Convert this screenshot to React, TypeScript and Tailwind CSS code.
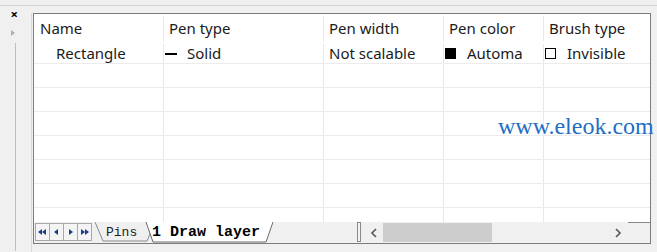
import React from 'react';

const cols = [130, 160, 120, 100, 106];

function Cell({ w, children, className = '' }: { w: number; children?: React.ReactNode; className?: string }) {
  return (
    <div
      className={`h-full shrink-0 flex items-center border-r border-[#e8e8e8] ${className}`}
      style={{ width: w }}
    >
      {children}
    </div>
  );
}

function NavBtn({ kind }: { kind: 'first' | 'prev' | 'next' | 'last' }) {
  return (
    <div className="w-[15px] h-[18px] border border-[#a8a8a8] bg-[#f4f4f4] flex items-center justify-center -ml-px first:ml-0">
      <svg width="9" height="8" viewBox="0 0 9 8" fill="#1e3c8c">
        {kind === 'first' && (
          <>
            <polygon points="0,4 4,1 4,7" />
            <polygon points="4,4 8,1 8,7" />
          </>
        )}
        {kind === 'prev' && <polygon points="2,4 6,1 6,7" />}
        {kind === 'next' && <polygon points="3,1 7,4 3,7" />}
        {kind === 'last' && (
          <>
            <polygon points="1,1 5,4 1,7" />
            <polygon points="5,1 9,4 5,7" />
          </>
        )}
      </svg>
    </div>
  );
}

export default function App() {
  return (
    <div className="w-[657px] h-[252px] bg-[#f0f0f0] relative overflow-hidden font-['Noto_Sans',sans-serif] text-[#1a1a1a]">
      {/* top rule */}
      <div className="h-[5px]" />
      <div className="h-px bg-[#d2d2d2]" />

      <div className="flex h-[246px]">
        {/* Left strip */}
        <div className="w-[33px] shrink-0 flex">
          <div className="w-[15px] flex flex-col items-end">
            <div className="mt-[2px] mr-[-3px] text-[13px] font-bold leading-none text-black">×</div>
            <svg className="mt-[9px]" width="4" height="6" viewBox="0 0 4 6">
              <polygon points="0,0 4,3 0,6" fill="#b0b0b0" />
            </svg>
          </div>
          <div className="w-px bg-[#bdbdbd] mt-[37px] mb-[1px]" />
          <div className="w-[15px]" />
          <div className="w-px bg-[#dadada] mt-[7px]" />
          <div className="w-px" />
        </div>

        {/* Panel */}
        <div className="mt-[7px] w-[618px] h-[231px] border border-[#7c7c7c] bg-white flex flex-col">
          {/* table */}
          <div className="h-[208px] overflow-hidden text-[15px] leading-none">
            <div className="flex h-[27px] pt-[2px]">
              <Cell w={cols[0]} className="pl-[6px]">Name</Cell>
              <Cell w={cols[1]} className="pl-[5px]">Pen type</Cell>
              <Cell w={cols[2]} className="pl-[5px]">Pen width</Cell>
              <Cell w={cols[3]} className="pl-[5px]">Pen color</Cell>
              <Cell w={cols[4]} className="pl-[5px] border-r-0">Brush type</Cell>
            </div>
            <div className="flex h-[23px] border-b border-[#ececec] pt-[3px]">
              <Cell w={cols[0]} className="pl-[22px]">Rectangle</Cell>
              <Cell w={cols[1]} className="pl-px">
                <span className="w-[12px] h-[2px] bg-black mr-[10px]" />
                Solid
              </Cell>
              <Cell w={cols[2]} className="pl-[5px]">Not scalable</Cell>
              <Cell w={cols[3]} className="pl-px">
                <span className="w-[11px] h-[11px] bg-black mr-[11px]" />
                Automa
              </Cell>
              <Cell w={cols[4]} className="pl-px border-r-0">
                <span className="w-[11px] h-[11px] border border-black bg-white mr-[11px]" />
                Invisible
              </Cell>
            </div>
            {[0, 1, 2, 3, 4, 5, 6].map((i) => (
              <div key={i} className="flex h-[24px] border-b border-[#ececec]">
                {cols.map((w, j) => (
                  <Cell key={j} w={w} className={j === 4 ? 'border-r-0' : ''} />
                ))}
              </div>
            ))}
          </div>

          {/* tab bar */}
          <div className="h-[21px] bg-[#f0f0f0] flex items-start relative">
            <svg className="absolute left-[61px] top-0" width="180" height="21" viewBox="0 0 180 21">
              <polyline points="0,0 8,19 52,19 60,0" fill="none" stroke="#8a8a8a" />
              <polygon points="51,0 58,20 171,20 178,0" fill="#fff" />
              <polyline points="51,0 58,20 171,20 178,0" fill="none" stroke="#6a6a6a" />
            </svg>
            <div className="relative flex mt-px ml-px">
              <NavBtn kind="first" />
              <NavBtn kind="prev" />
              <NavBtn kind="next" />
              <NavBtn kind="last" />
            </div>
            <div className="relative h-[21px] w-[52px] flex items-center">
              <span className="ml-[14px] mt-[1px] font-['Liberation_Mono',monospace] text-[13px] text-[#222]">Pins</span>
            </div>
            <div className="relative h-[21px] w-[124px] flex items-center">
              <span className="ml-[8px] mt-[1px] font-['Liberation_Mono',monospace] font-bold text-[15px] text-black">
                1 Draw layer
              </span>
            </div>
            <div className="ml-auto flex items-start h-[21px]">
              <div className="w-[4px] h-[20px] border border-[#8a8a8a] bg-[#f4f4f4]" />
              <div className="ml-[3px] w-[264px] h-[21px] flex items-center">
                <div className="w-[19px] flex justify-center">
                  <svg width="8" height="10" viewBox="0 0 8 10">
                    <polyline points="6,1 2,5 6,9" fill="none" stroke="#555" strokeWidth="1.6" />
                  </svg>
                </div>
                <div className="w-[109px] h-[19px] bg-[#cdcdcd]" />
                <div className="flex-1" />
                <div className="w-[20px] flex justify-center">
                  <svg width="8" height="10" viewBox="0 0 8 10">
                    <polyline points="2,1 6,5 2,9" fill="none" stroke="#555" strokeWidth="1.6" />
                  </svg>
                </div>
              </div>
              <div className="w-[22px] h-[21px] border-t border-[#8a8a8a]" />
            </div>
          </div>
        </div>
        <div className="flex-1" />
      </div>

      {/* watermark */}
      <div className="absolute left-[498px] top-[114px] font-['Liberation_Serif',serif] text-[24px] leading-none text-[#1f6fc5] whitespace-nowrap">
        www.eleok.com
      </div>
    </div>
  );
}
